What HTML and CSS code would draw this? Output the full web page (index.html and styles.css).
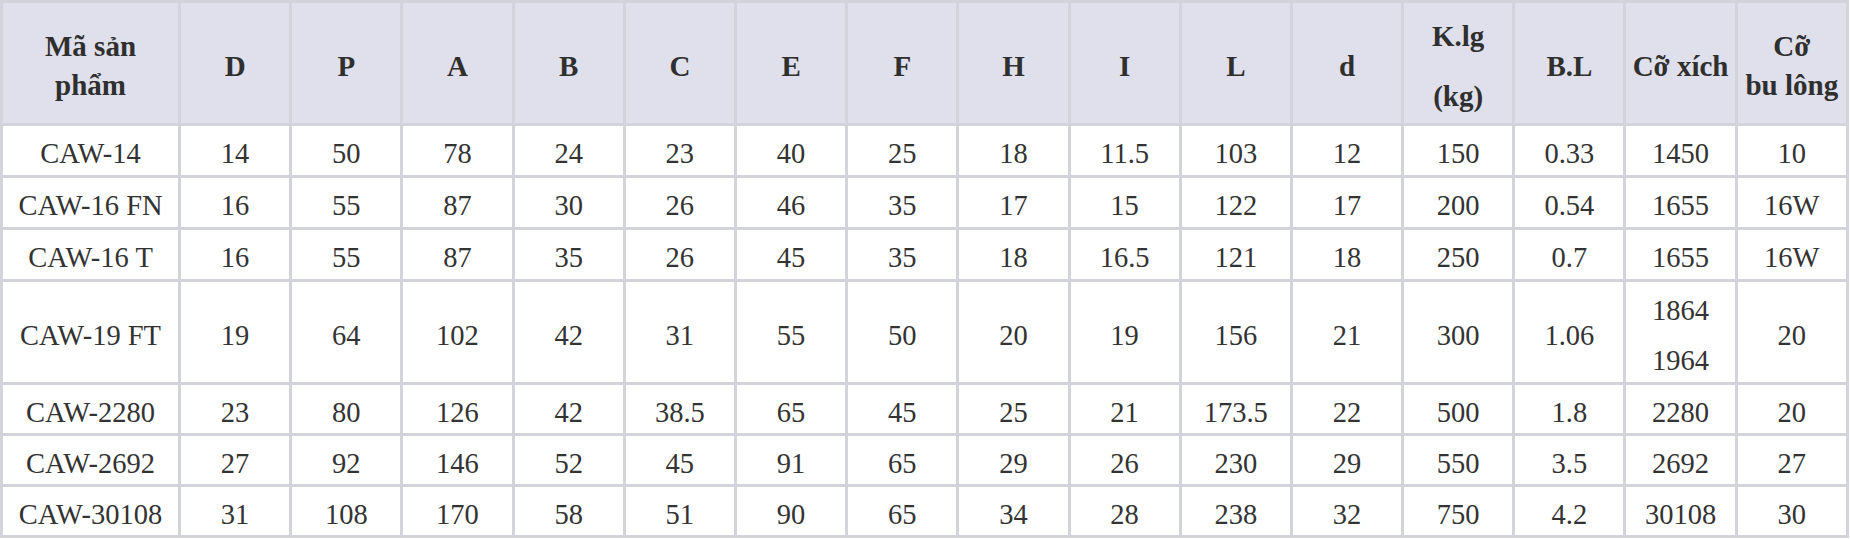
FILE: index.html
```html
<!DOCTYPE html>
<html lang="vi">
<head>
<meta charset="utf-8">
<title>Bảng thông số CAW</title>
<link rel="stylesheet" href="styles.css">
</head>
<body>
<table class="spec">
  <colgroup>
    <col class="c-name">
    <col class="c-num"><col class="c-num"><col class="c-num"><col class="c-num"><col class="c-num">
    <col class="c-num"><col class="c-num"><col class="c-num"><col class="c-num"><col class="c-num">
    <col class="c-num"><col class="c-num"><col class="c-num"><col class="c-num"><col class="c-num">
  </colgroup>
  <thead>
    <tr class="r-head">
      <th>Mã sản phẩm</th>
      <th>D</th><th>P</th><th>A</th><th>B</th><th>C</th><th>E</th><th>F</th><th>H</th><th>I</th><th>L</th><th>d</th>
      <th><p class="para">K.lg</p><p class="para">(kg)</p></th>
      <th>B.L</th>
      <th>Cỡ xích</th>
      <th>Cỡ<br>bu lông</th>
    </tr>
  </thead>
  <tbody>
    <tr class="r-a">
      <td>CAW-14</td><td>14</td><td>50</td><td>78</td><td>24</td><td>23</td><td>40</td><td>25</td><td>18</td><td>11.5</td><td>103</td><td>12</td><td>150</td><td>0.33</td><td>1450</td><td>10</td>
    </tr>
    <tr class="r-a">
      <td>CAW-16 FN</td><td>16</td><td>55</td><td>87</td><td>30</td><td>26</td><td>46</td><td>35</td><td>17</td><td>15</td><td>122</td><td>17</td><td>200</td><td>0.54</td><td>1655</td><td>16W</td>
    </tr>
    <tr class="r-a">
      <td>CAW-16 T</td><td>16</td><td>55</td><td>87</td><td>35</td><td>26</td><td>45</td><td>35</td><td>18</td><td>16.5</td><td>121</td><td>18</td><td>250</td><td>0.7</td><td>1655</td><td>16W</td>
    </tr>
    <tr class="r-tall">
      <td>CAW-19 FT</td><td>19</td><td>64</td><td>102</td><td>42</td><td>31</td><td>55</td><td>50</td><td>20</td><td>19</td><td>156</td><td>21</td><td>300</td><td>1.06</td>
      <td><p class="para">1864</p><p class="para">1964</p></td><td>20</td>
    </tr>
    <tr class="r-b">
      <td>CAW-2280</td><td>23</td><td>80</td><td>126</td><td>42</td><td>38.5</td><td>65</td><td>45</td><td>25</td><td>21</td><td>173.5</td><td>22</td><td>500</td><td>1.8</td><td>2280</td><td>20</td>
    </tr>
    <tr class="r-b">
      <td>CAW-2692</td><td>27</td><td>92</td><td>146</td><td>52</td><td>45</td><td>91</td><td>65</td><td>29</td><td>26</td><td>230</td><td>29</td><td>550</td><td>3.5</td><td>2692</td><td>27</td>
    </tr>
    <tr class="r-b">
      <td>CAW-30108</td><td>31</td><td>108</td><td>170</td><td>58</td><td>51</td><td>90</td><td>65</td><td>34</td><td>28</td><td>238</td><td>32</td><td>750</td><td>4.2</td><td>30108</td><td>30</td>
    </tr>
  </tbody>
</table>
</body>
</html>
```

FILE: styles.css
```css
html, body {
  margin: 0;
  padding: 0;
  background: #ffffff;
}

.spec {
  table-layout: fixed;
  width: 1849px;
  border-collapse: separate;
  border-spacing: 0;
  border-top: 3px solid #d3d4db;
  border-left: 3px solid #d3d4db;
  font-family: "Liberation Serif", "Times New Roman", serif;
  font-size: 28.5px;
  line-height: 39px;
  color: #333333;
}

.c-name { width: 178px; }
.c-num { width: 111.2px; }

.spec th,
.spec td {
  font-family: "Liberation Serif", "Times New Roman", serif;
  border-right: 3px solid #d3d4db;
  border-bottom: 3px solid #d3d4db;
  padding: 6px 5px 0;
  text-align: center;
  vertical-align: middle;
  overflow: hidden;
}

.spec th {
  background: #dfe0eb;
  font-weight: bold;
  font-size: 29px;
  color: #2f2f2f;
}

.spec td {
  font-weight: normal;
}

.r-head { height: 123px; }
.r-a { height: 52px; }
.r-tall { height: 103px; }
.r-b { height: 51px; }

.para {
  margin: 0;
}

.spec th .para + .para {
  margin-top: 21px;
}

.spec td .para + .para {
  margin-top: 11px;
}
```
